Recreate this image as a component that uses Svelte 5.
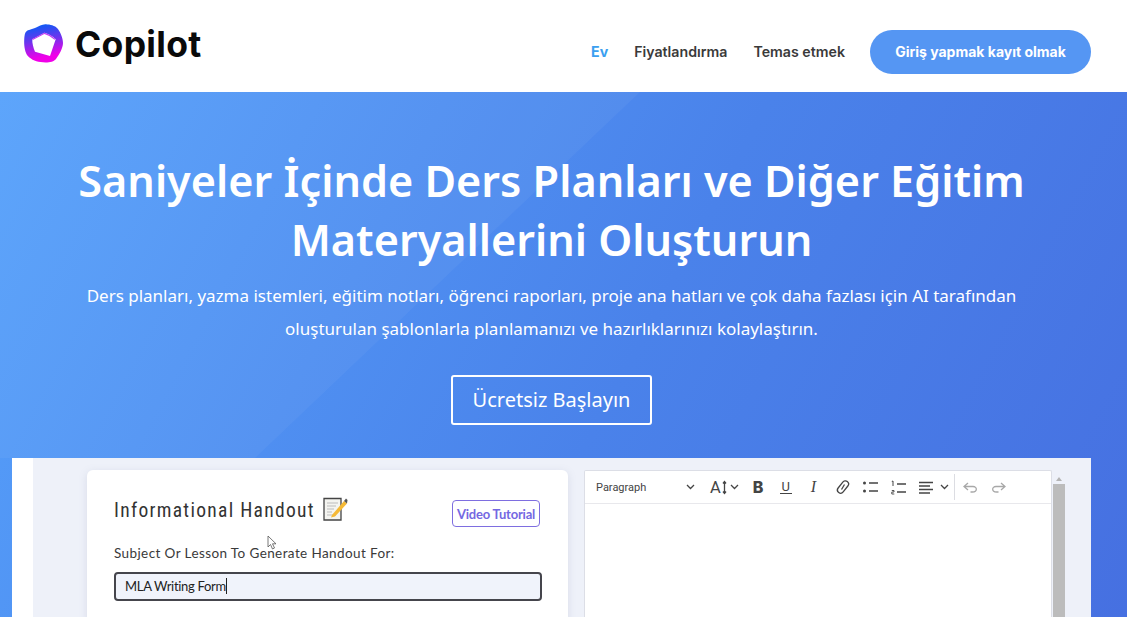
<script lang="ts">
    const links = [
        { label: "Ev", active: true },
        { label: "Fiyatlandırma", active: false },
        { label: "Temas etmek", active: false }
    ];
</script>

<div class="page">
    <header>
        <a class="brand" href="#top">
            <svg width="40" height="40" viewBox="0 0 40 40" aria-hidden="true">
                <defs>
                    <linearGradient id="ring" x1="0.4" y1="0" x2="0.6" y2="1">
                        <stop offset="0" stop-color="#0a5cf5" />
                        <stop offset="0.4" stop-color="#6a35ee" />
                        <stop offset="0.85" stop-color="#f000e8" />
                    </linearGradient>
                </defs>
                <path fill="url(#ring)" fill-rule="evenodd" d="M1.500 8.500C2.500 6 7 5.500 11 4C15 2.500 18 0 22 .3C26 .6 31 1.500 33.500 4.500C36 7.500 39 14 39 19C39 24 35 31 32 35C29.500 38.500 22 39 16.500 38C11 37.500 5.500 34.500 3 31C.5 27 0 20 .2 16C.4 13 .5 10.500 1.500 8.500ZM20.500 8.800L8.300 15.300C8 19 9.500 24 11 27.700L26 32L31.700 15.300C29 12.500 25 10 20.500 8.800Z" />
                <path d="M8.500 15.500L20.500 9.300C25 10.500 28.500 12.800 31 15.300" fill="none" stroke="#c23cf2" stroke-width="1.200" />
            </svg>
            <span>Copilot</span>
        </a>
        <nav>
            {#each links as link}
                <a class:active={link.active} href="#top">{link.label}</a>
            {/each}
            <a class="login" href="#top">Giriş yapmak kayıt olmak</a>
        </nav>
    </header>

    <section class="hero">
        <h1>Saniyeler İçinde Ders Planları ve Diğer Eğitim<br />Materyallerini Oluşturun</h1>
        <p>Ders planları, yazma istemleri, eğitim notları, öğrenci raporları, proje ana hatları ve çok daha fazlası için AI tarafından<br />oluşturulan şablonlarla planlamanızı ve hazırlıklarınızı kolaylaştırın.</p>
        <a class="cta" href="#top">Ücretsiz Başlayın</a>

        <div class="shot">
            <div class="shot-inner">
                <div class="card">
                    <div class="card-head">
                        <h2>Informational Handout</h2>
                        <svg class="memo" width="26" height="26" viewBox="0 0 26 26" aria-hidden="true">
                            <path d="M2 2.500H19V24H2Z" fill="#f4f4f0" stroke="#444" stroke-width="1.300" />
                            <path d="M5 7H16M5 10H14M5 13H12M5 16H10M5 19H14" stroke="#bbb" stroke-width="1.200" />
                            <path d="M10 19L22 5L25 7.500L13 20.500L9 21.500Z" fill="#f5b935" />
                            <path d="M22 5L24 2.500L25.500 4L25 7.500Z" fill="#555" />
                        </svg>
                        <button class="tutorial">Video Tutorial</button>
                    </div>
                    <label for="subject">Subject Or Lesson To Generate Handout For:</label>
                    <div class="input" id="subject"><span>MLA Writing Form</span></div>
                    <svg class="cursor" width="11" height="15" viewBox="0 0 11 15" aria-hidden="true">
                        <path d="M1 1V12L3.500 9.500L5.500 14L7.500 13L5.500 8.800H9Z" fill="#fff" stroke="#555" stroke-width="0.800" />
                    </svg>
                </div>

                <div class="editor-wrap">
                    <div class="editor">
                        <div class="toolbar">
                            <span class="para">Paragraph</span>
                            <svg class="chev first" width="9" height="6" viewBox="0 0 9 6"><path d="M1 1L4.500 4.500L8 1" /></svg>
                            <span class="size">A</span>
                            <svg class="ibeam" width="5" height="15" viewBox="0 0 5 15"><path d="M2.500 2V13M1 3.500L2.500 1.500L4 3.500M1 11.500L2.500 13.500L4 11.500" /></svg>
                            <svg class="chev" width="9" height="6" viewBox="0 0 9 6"><path d="M1 1L4.500 4.500L8 1" /></svg>
                            <span class="bold">B</span>
                            <span class="under">U</span>
                            <span class="ital">I</span>
                            <svg class="tool link" width="14" height="16" viewBox="0 0 14 16"><rect x="3.800" y="1" width="6.400" height="14" rx="3.200" transform="rotate(38 7 8)" /><path d="M5.500 10.500L8.500 5.500" /></svg>
                            <svg class="tool" width="15" height="12" viewBox="0 0 15 12"><circle cx="1.500" cy="2" r="1.500" fill="#444" stroke="none" /><circle cx="1.500" cy="10" r="1.500" fill="#444" stroke="none" /><path d="M6 2H15M6 10H15" /></svg>
                            <svg class="tool" width="15" height="15" viewBox="0 0 15 15"><path d="M6 4H15M6 12H15" /><path d="M2 1V6M.8 1.500L2 1" stroke-width="1" /><path d="M.8 10.500H3V12H.8V14H3.300" stroke-width="0.900" /></svg>
                            <svg class="tool align" width="15" height="13" viewBox="0 0 15 13"><path d="M0 1.500H14M0 5H11M0 8.500H14M0 12H11" /></svg>
                            <svg class="chev" width="9" height="6" viewBox="0 0 9 6"><path d="M1 1L4.500 4.500L8 1" /></svg>
                            <i class="sep"></i>
                            <svg class="hist" width="15" height="11" viewBox="0 0 15 11"><path d="M5 1L1 4.500L5 8M1 4.500H10C14.500 4.500 14.500 10 9.500 10H7.500" /></svg>
                            <svg class="hist" width="15" height="11" viewBox="0 0 15 11"><path d="M10 1L14 4.500L10 8M14 4.500H5C.5 4.500 .5 10 5.500 10H7.500" /></svg>
                        </div>
                        <div class="body"></div>
                    </div>
                    <div class="scroll">
                        <i class="arrow"></i>
                        <div class="thumb"></div>
                    </div>
                </div>
            </div>
        </div>
    </section>
</div>

<style>
    :global(body) {
        margin: 0;
        overflow: hidden;
    }

    .page {
        height: 617px;
        overflow: hidden;
        font-family: Inter, sans-serif;
    }

    a {
        text-decoration: none;
    }

    header {
        height: 92px;
        box-sizing: border-box;
        padding: 0 36px 0 24px;
        background: #fff;
        display: flex;
        justify-content: space-between;
    }

    .brand {
        display: flex;
        align-items: center;
        gap: 12px;
        height: 88px;
        color: #0a0a0a;
        font-size: 35.500px;
        font-weight: 700;
    }

    .brand span {
        margin-left: -1px;
        letter-spacing: 0.3px;
    }

    nav {
        display: flex;
        align-items: center;
        height: 104px;
        font-size: 14.200px;
        font-weight: 600;
    }

    nav a {
        color: #3a3a3a;
        margin: 0 26px 2px 0;
    }

    nav a.active {
        color: #3b9ff0;
        font-weight: 700;
    }

    nav a.login {
        margin: 0 0 0 -1px;
        width: 221px;
        height: 44px;
        line-height: 44px;
        text-align: center;
        border-radius: 22px;
        background: #5596f3;
        color: #fff;
        font-size: 14px;
        font-weight: 700;
    }

    .hero {
        position: relative;
        box-sizing: border-box;
        height: 525px;
        padding-right: 24px;
        overflow: hidden;
        background: linear-gradient(118deg, #56a1fb 0%, #4a82ea 55%, #4670e1 100%);
        color: #fff;
        text-align: center;
        display: flex;
        flex-direction: column;
        align-items: center;
    }

    .hero::before {
        content: "";
        position: absolute;
        inset: 0;
        background: rgba(255, 255, 255, 0.045);
        clip-path: polygon(0 0, 640px 0, 255px 366px, 0 366px);
    }

    .hero > * {
        position: relative;
    }

    h1 {
        margin: 59px 0 0;
        font-family: "Noto Sans", sans-serif;
        font-size: 43.200px;
        line-height: 59px;
        font-weight: 600;
    }

    .hero p {
        margin: 10px 0 0;
        font-family: "Noto Sans", sans-serif;
        font-size: 17px;
        line-height: 33px;
    }

    .cta {
        margin-top: 30px;
        box-sizing: border-box;
        width: 201px;
        height: 50px;
        line-height: 46px;
        border: 2px solid #fff;
        border-radius: 3px;
        color: #fff;
        font-family: "Noto Sans", sans-serif;
        font-size: 20px;
    }

    .shot {
        box-sizing: border-box;
        margin: 33px 12px 0 12px;
        align-self: stretch;
        height: 160px;
        padding-left: 21px;
        background: #fff;
    }

    .shot-inner {
        height: 100%;
        box-sizing: border-box;
        padding: 12px 26px 0 54px;
        background: #eef1f9;
        display: grid;
        grid-template-columns: 481px 481px;
        gap: 16px;
        text-align: left;
    }

    .card {
        position: relative;
        background: #fff;
        border-radius: 6px 6px 0 0;
        padding: 26px 27px 0 27px;
        box-shadow: 0 2px 8px rgba(120, 130, 160, 0.18);
        color: #333;
    }

    .card-head {
        display: flex;
        align-items: flex-start;
        height: 49px;
    }

    h2 {
        margin: 5px 7px 0 0;
        font-family: Roboto, sans-serif;
        font-size: 19.500px;
        font-stretch: 75%;
        line-height: 20px;
        font-weight: 400;
        letter-spacing: 1.300px;
        color: #333;
    }

    .memo {
        margin-top: 0;
    }

    .tutorial {
        margin-left: auto;
        margin-top: 4px;
        margin-right: 1px;
        box-sizing: border-box;
        width: 88px;
        height: 27px;
        padding: 0;
        background: #fff;
        border: 1.500px solid #7e6ee0;
        border-radius: 4px;
        color: #7468e2;
        font-family: Lato, sans-serif;
        font-size: 13px;
        font-weight: 700;
        letter-spacing: -0.2px;
    }

    label {
        display: block;
        font-family: Lato, sans-serif;
        font-size: 13.500px;
        line-height: 16px;
        letter-spacing: 0.4px;
        color: #3a3a3a;
    }

    .input {
        margin-top: 11px;
        box-sizing: border-box;
        height: 29px;
        width: 428px;
        padding-left: 9px;
        background: #f0f3fb;
        border: 2px solid #45454c;
        border-radius: 4px;
        font-family: Lato, sans-serif;
        font-size: 13px;
        line-height: 25px;
        color: #222;
        letter-spacing: -0.3px;
    }

    .input span {
        border-right: 1px solid #222;
    }

    .cursor {
        position: absolute;
        left: 180px;
        top: 65px;
    }

    .editor-wrap {
        display: flex;
        gap: 1px;
    }

    .editor {
        width: 468px;
        box-sizing: border-box;
        background: #fff;
        border: 1px solid #dcdee6;
        border-bottom: 0;
        border-radius: 2px 2px 0 0;
    }

    .toolbar {
        height: 32px;
        border-bottom: 1px solid #e8e8ec;
        display: flex;
        align-items: center;
        padding-left: 11px;
        color: #444;
    }

    svg {
        flex: none;
    }

    .toolbar svg {
        fill: none;
        stroke: #444;
        stroke-width: 1.300;
    }

    .para {
        width: 90px;
        font-family: Roboto, sans-serif;
        font-size: 11px;
    }

    .chev.first {
        margin-right: 15px;
    }

    .size {
        font-family: Roboto, sans-serif;
        font-size: 16.500px;
        margin-right: 1px;
    }

    .ibeam {
        margin-right: 3px;
    }

    .bold {
        margin-left: 14px;
        width: 14px;
        font-family: Inter, sans-serif;
        font-weight: 800;
        font-size: 16px;
    }

    .under {
        margin-left: 13px;
        width: 12px;
        font-family: Roboto, sans-serif;
        font-size: 13px;
        border-bottom: 1px solid #444;
        line-height: 13px;
        text-align: center;
    }

    .ital {
        margin-left: 19px;
        width: 12px;
        font-family: "Liberation Serif", serif;
        font-style: italic;
        font-size: 16px;
    }

    .tool {
        margin-left: 13px;
    }

    .tool + .chev {
        margin-left: 6px;
    }

    .sep {
        width: 1px;
        height: 26px;
        margin: 0 8px 0 5px;
        background: #dcdde2;
    }

    .toolbar .hist {
        stroke: #a8a8a8;
        margin-right: 13px;
    }

    .scroll {
        width: 12px;
    }

    .arrow {
        display: block;
        margin: 7px auto 0;
        width: 0;
        height: 0;
        border: 3px solid transparent;
        border-top: 0;
        border-bottom: 4px solid #b4b4b4;
    }

    .thumb {
        margin-top: 3px;
        height: 140px;
        background: #bcbcbc;
    }
</style>
